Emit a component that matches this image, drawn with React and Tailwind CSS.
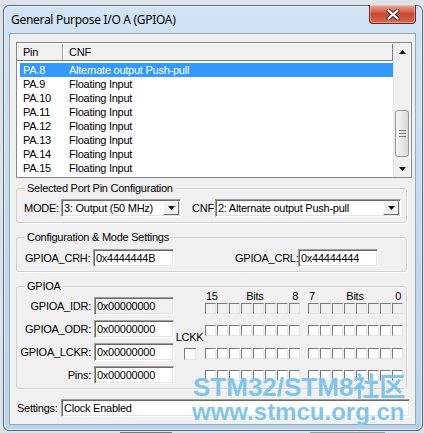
import React from 'react';

const pins = [
  { pin: 'PA.8', cnf: 'Alternate output Push-pull', selected: true },
  { pin: 'PA.9', cnf: 'Floating Input' },
  { pin: 'PA.10', cnf: 'Floating Input' },
  { pin: 'PA.11', cnf: 'Floating Input' },
  { pin: 'PA.12', cnf: 'Floating Input' },
  { pin: 'PA.13', cnf: 'Floating Input' },
  { pin: 'PA.14', cnf: 'Floating Input' },
  { pin: 'PA.15', cnf: 'Floating Input' },
];

const registers = [
  { label: 'GPIOA_IDR:', value: '0x00000000', readOnly: true },
  { label: 'GPIOA_ODR:', value: '0x00000000' },
  { label: 'GPIOA_LCKR:', value: '0x00000000' },
  { label: 'Pins:', value: '0x00000000' },
];

const bitRowGap = ['mt-[1px]', 'mt-[11px]', 'mt-[12px]', 'mt-[11px]'];

const sunken =
  'border border-[#a0a0a0] border-r-white border-b-white shadow-[inset_1px_1px_0_#696969,inset_-1px_-1px_0_#e3e3e3]';

function Arrow({ down = true }) {
  return (
    <svg width="7" height="4" viewBox="0 0 7 4">
      <polygon points={down ? '0,0 7,0 3.5,4' : '0,4 7,4 3.5,0'} fill="#111" />
    </svg>
  );
}

function Edit({ value, className = '', readOnly }) {
  return (
    <div className={`h-[18px] flex items-center pl-[2px] ${readOnly ? 'bg-[#f0f0f0]' : 'bg-white'} ${sunken} ${className}`}>
      {value}
    </div>
  );
}

function Combo({ value, className = '' }) {
  return (
    <div className={`h-[18px] flex items-center bg-white ${sunken} ${className}`}>
      <span className="flex-1 pl-[2px]">{value}</span>
      <span className="w-[16px] h-[14px] mr-[1px] flex items-center justify-center bg-[#f0f0f0] border border-t-white border-l-white border-r-[#696969] border-b-[#696969]">
        <Arrow />
      </span>
    </div>
  );
}

function Group({ title, children }) {
  return (
    <fieldset className="w-[391px] border border-[#d0d0d0] rounded-[3px] shadow-[1px_1px_0_white]">
      <legend className="ml-[8px] px-[2px] leading-[14px]">{title}</legend>
      {children}
    </fieldset>
  );
}

function Bit({ disabled }) {
  return (
    <span
      className={`w-[11px] h-[11px] border border-t-[#7a7a7a] border-l-[#7a7a7a] border-r-[#e3e3e3] border-b-[#e3e3e3] ${disabled ? 'bg-[#f0f0f0]' : 'bg-white'}`}
    />
  );
}

function BitBlock({ hi, lo }) {
  return (
    <div className="w-[95px] flex flex-col">
      <div className="h-[12px] leading-[12px] flex justify-between pl-[1px] pr-[2px]">
        <span>{hi}</span>
        <span>Bits</span>
        <span>{lo}</span>
      </div>
      {bitRowGap.map((gap, r) => (
        <div key={r} className={`flex gap-[1px] ${gap}`}>
          {Array.from({ length: 8 }).map((_, i) => (
            <Bit key={i} disabled={r === 0} />
          ))}
        </div>
      ))}
    </div>
  );
}

function CloseButton() {
  return (
    <div className="-mt-[1px] w-[47px] h-[19px] rounded-b-[4px] border border-t-0 border-[#6b2a20] bg-gradient-to-b from-[#e9a99c] via-[#c9452f] to-[#d96a52] shadow-[inset_0_0_0_1px_rgba(255,220,210,0.45)] flex items-center justify-center">
      <svg width="14" height="11" viewBox="0 0 14 11">
        <path d="M2.5 1.5 L11.5 9.5 M11.5 1.5 L2.5 9.5" stroke="#3b2a28" strokeWidth="4" strokeLinecap="round" />
        <path d="M2.5 1.5 L11.5 9.5 M11.5 1.5 L2.5 9.5" stroke="#ffffff" strokeWidth="2.2" strokeLinecap="round" />
      </svg>
    </div>
  );
}

function PinList() {
  return (
    <div className="w-[396px] h-[136px] border border-[#828790] bg-white flex">
      <div className="w-[376px] flex flex-col">
        <div className="mt-[1px] h-[17px] flex bg-[#f0f0f0] border-b border-r border-[#808080]">
          <div className="w-[46px] pl-[6px] leading-[16px] border-r border-[#a0a0a0]">Pin</div>
          <div className="flex-1 pl-[5px] leading-[16px] border-l border-white">CNF</div>
        </div>
        <div className="mt-[2px] ml-[3px] w-[373px] flex flex-col">
          {pins.map((p) => (
            <div
              key={p.pin}
              className={`h-[14px] leading-[14px] flex ${p.selected ? 'bg-[#3399ff] text-white' : ''}`}
            >
              <span className="w-[49px] pl-[3px]">{p.pin}</span>
              <span>{p.cnf}</span>
            </div>
          ))}
        </div>
      </div>
      <div className="w-[17px] flex flex-col bg-[#f0f0f0] border-l border-[#e6e6e6]">
        <div className="h-[17px] flex items-center justify-center">
          <Arrow down={false} />
        </div>
        <div className="flex-1">
          <div className="mt-[50px] mx-[1px] h-[47px] rounded-[3px] border border-[#979797] bg-gradient-to-r from-[#f7f7f7] to-[#d8d8d8] flex flex-col items-center justify-center gap-[2px]">
            <span className="w-[7px] h-[1px] bg-[#7e7e7e]" />
            <span className="w-[7px] h-[1px] bg-[#7e7e7e]" />
            <span className="w-[7px] h-[1px] bg-[#7e7e7e]" />
          </div>
        </div>
        <div className="h-[17px] flex items-center justify-center">
          <Arrow />
        </div>
      </div>
    </div>
  );
}

export default function App() {
  return (
    <div className="relative w-[424px] h-[433px] overflow-hidden bg-[#dfe3e8] pl-[3px] pt-[5px]">
      <div className="w-[420px] h-[426px] rounded-[6px] border border-[#56697f] bg-gradient-to-b from-[#d2e3f5] via-[#c4d9ef] to-[#bad2eb] shadow-[inset_0_0_0_1px_rgba(255,255,255,0.55)] flex flex-col">
        {/* caption */}
        <div className="h-[27px] flex items-start justify-between pl-[7px] pr-[6px]">
          <span className="mt-[6px] text-[12px] leading-[16px] tracking-[-0.3px] text-black font-['Noto_Sans','Open_Sans',sans-serif]">
            General Purpose I/O A (GPIOA)
          </span>
          <CloseButton />
        </div>

        {/* dialog body */}
        <div className="ml-[5px] w-[407px] h-[392px] border border-[#97a8ba] bg-[#f0f0f0] flex flex-col pt-[8px] pl-[6px] font-['Liberation_Sans',Arial,sans-serif] text-[11px] tracking-[-0.25px] text-black">
          <PinList />

          <div className="mt-[3px]">
            <Group title="Selected Port Pin Configuration">
              <div className="flex items-center pt-[4px] pb-[5px] pl-[7px]">
                <span className="w-[37px]">MODE:</span>
                <Combo value="3: Output (50 MHz)" className="w-[120px]" />
                <span className="ml-[11px] w-[23px]">CNF:</span>
                <Combo value="2: Alternate output Push-pull" className="w-[186px]" />
              </div>
            </Group>
          </div>

          <div className="mt-[7px]">
            <Group title="Configuration & Mode Settings">
              <div className="flex items-center pt-[5px] pb-[4px] pl-[8px]">
                <span className="w-[68px]">GPIOA_CRH:</span>
                <Edit value="0x4444444B" className="w-[81px]" />
                <span className="ml-[61px] w-[63px]">GPIOA_CRL:</span>
                <Edit value="0x44444444" className="w-[80px]" />
              </div>
            </Group>
          </div>

          <div className="mt-[7px]">
            <Group title="GPIOA">
              <div className="flex items-start pt-[4px] pb-[4px] pl-[3px]">
                <div className="flex flex-col gap-[5px]">
                  {registers.map((r) => (
                    <div key={r.label} className="flex items-center">
                      <span className="w-[71px] text-right">{r.label}</span>
                      <Edit value={r.value} readOnly={r.readOnly} className="ml-[3px] w-[80px]" />
                    </div>
                  ))}
                </div>
                <div className="w-[31px] flex flex-col items-center">
                  <span className="mt-[33px] leading-[14px]">LCKK</span>
                  <span className="mt-[4px] w-[12px] h-[12px] bg-white border border-t-[#7a7a7a] border-l-[#7a7a7a] border-r-[#e3e3e3] border-b-[#e3e3e3]" />
                </div>
                <div className="-mt-[7px] flex gap-[8px]">
                  <BitBlock hi="15" lo="8" />
                  <BitBlock hi="7" lo="0" />
                </div>
              </div>
            </Group>
          </div>

          <div className="mt-[10px] flex items-center pl-[1px]">
            <span className="w-[44px]">Settings:</span>
            <Edit value="Clock Enabled" className="w-[349px]" />
          </div>
        </div>
      </div>

      {/* desktop behind the dialog */}
      <div className="flex mt-[1px] h-[2px]">
        <span className="ml-[117px] w-[52px] bg-[#777]" />
        <span className="ml-[138px] w-[75px] bg-[#999]" />
      </div>

      <div className="absolute left-[193px] top-[374px] pointer-events-none font-['Liberation_Sans','Noto_Sans_CJK_SC',sans-serif] font-bold text-[#82c5e9]">
        <div className="text-[26px] leading-[26px]">STM32/STM8社区</div>
        <div className="-ml-[1px] text-[24px] leading-[24px]">www.stmcu.org.cn</div>
      </div>
    </div>
  );
}
